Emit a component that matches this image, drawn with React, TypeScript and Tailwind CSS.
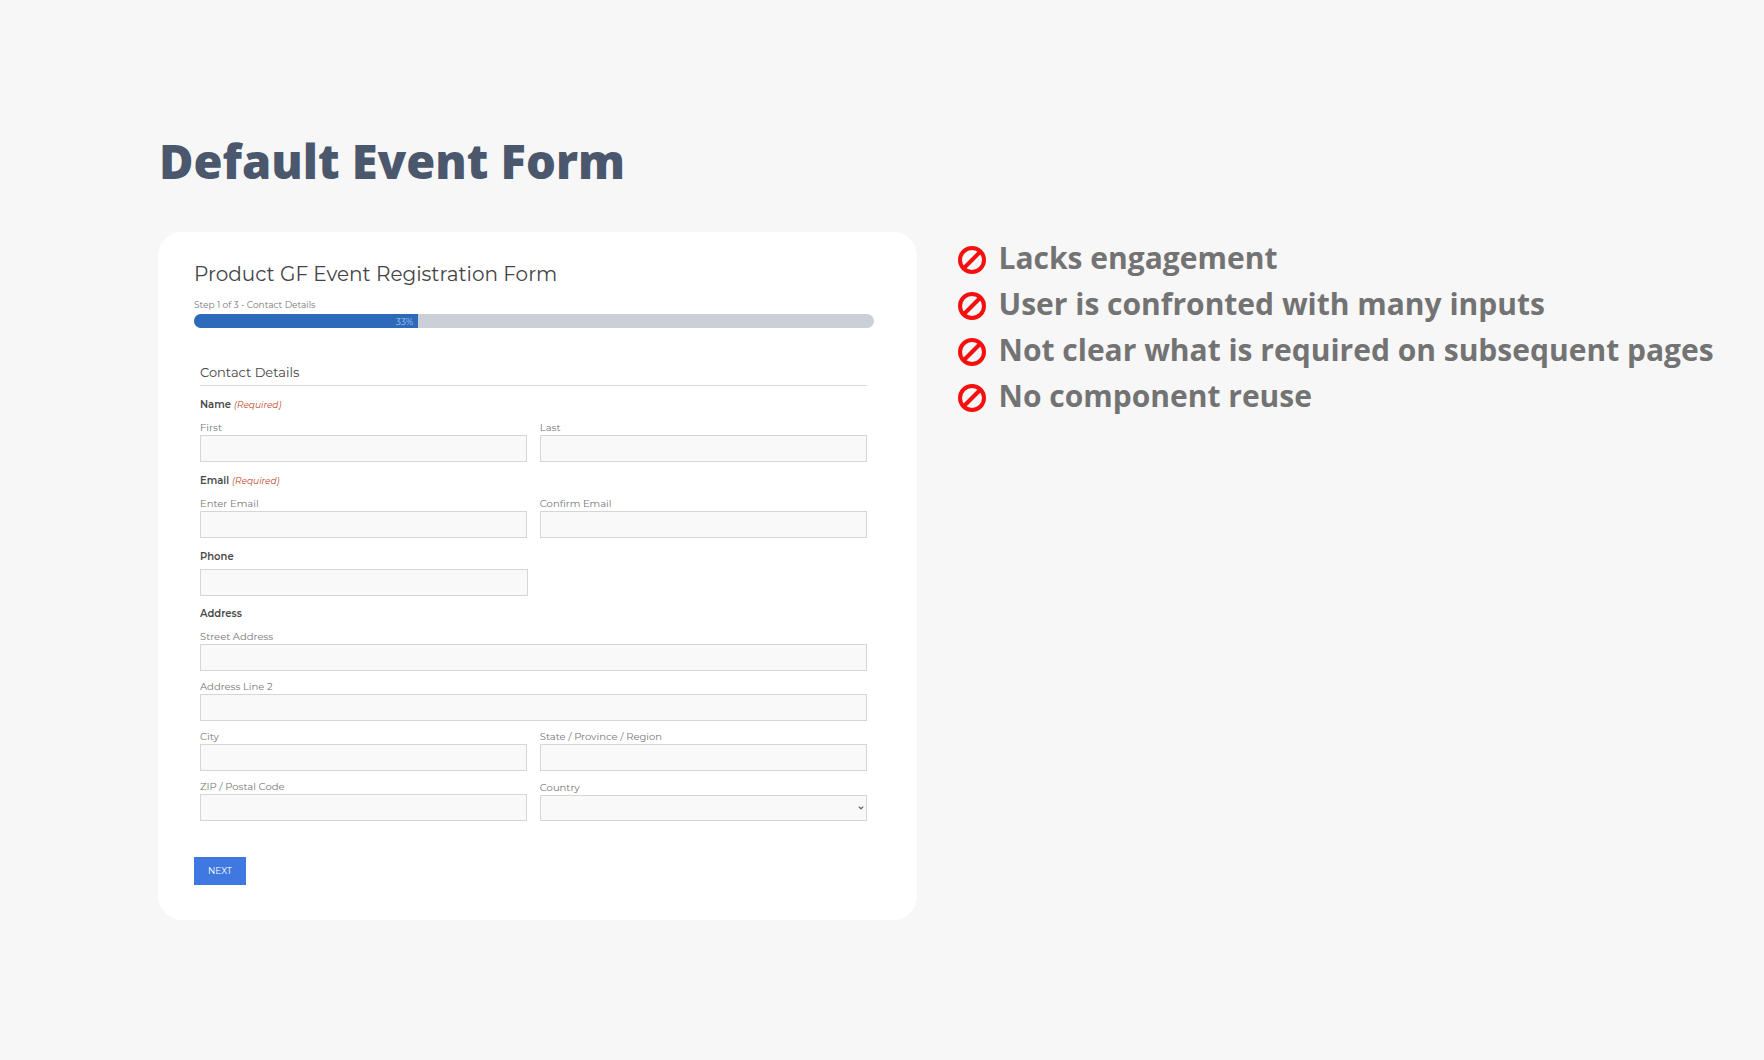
import type { ReactNode } from 'react';

const drawbacks = [
  'Lacks engagement',
  'User is confronted with many inputs',
  'Not clear what is required on subsequent pages',
  'No component reuse',
];

const control = 'block h-[27px] w-full rounded-none border border-[#d5d6d8] bg-[#f9f9f9] px-2 text-[10px] text-[#555]';

function ProhibitedIcon() {
  return (
    <svg viewBox="0 0 28 28" className="mt-1 size-7 shrink-0" fill="none" stroke="#f51010" strokeWidth="4" aria-hidden="true">
      <circle cx="14" cy="14" r="12" />
      <path d="M22.5 5.5 5.5 22.5" />
    </svg>
  );
}

function Field({ id, label, type = 'text', className = '' }: { id: string; label: string; type?: string; className?: string }) {
  return (
    <div className={className}>
      <label htmlFor={id} className="block text-[10px] leading-[15px] text-[#777]">
        {label}
      </label>
      <input id={id} type={type} className={control} />
    </div>
  );
}

function Group({ title, required = false, children }: { title: string; required?: boolean; children: ReactNode }) {
  return (
    <fieldset className="mb-[11px]">
      <legend className="mb-[7px] text-[10px] leading-4 font-semibold text-[#4a4a4a]">
        {title}
        {required && <span className="ml-[3px] text-[9px] font-normal text-[#c0452a] italic">(Required)</span>}
      </legend>
      <div className="grid grid-cols-2 gap-x-[13px] gap-y-2">{children}</div>
    </fieldset>
  );
}

function RegistrationForm() {
  return (
    <form
      onSubmit={(e) => e.preventDefault()}
      className="w-[43vw] shrink-0 rounded-3xl bg-white pt-7 pr-[43px] pb-[35px] pl-9 font-['Montserrat','Inter',sans-serif]"
    >
      <h2 className="text-xl leading-7 text-[#444]">Product GF Event Registration Form</h2>
      <p className="mt-[9px] mb-px text-[9px] leading-4 text-[#777]">Step 1 of 3 - Contact Details</p>
      <div
        role="progressbar"
        aria-label="Form progress"
        aria-valuenow={33}
        aria-valuemin={0}
        aria-valuemax={100}
        className="h-[14px] overflow-hidden rounded-full bg-[#cacfd8]"
      >
        <div className="flex h-full w-[33%] items-center justify-end bg-[#2d6bba] pr-[5px] text-[9px] leading-none text-[#a9c5ea]">33%</div>
      </div>

      <div className="mt-[33px] pr-[7px] pl-[6px]">
        <h3 className="mb-[11px] border-b border-[#d8d9db] pb-[2px] text-[13px] leading-[22px] text-[#444]">Contact Details</h3>

        <Group title="Name" required>
          <Field id="first" label="First" />
          <Field id="last" label="Last" />
        </Group>

        <Group title="Email" required>
          <Field id="email" label="Enter Email" type="email" />
          <Field id="confirm-email" label="Confirm Email" type="email" />
        </Group>

        <div className="mb-[10px]">
          <label htmlFor="phone" className="mb-1 block text-[10px] leading-4 font-semibold text-[#4a4a4a]">
            Phone
          </label>
          <div className="grid grid-cols-2 gap-x-[11px]">
            <input id="phone" type="tel" className={control} />
          </div>
        </div>

        <Group title="Address">
          <Field id="street" label="Street Address" className="col-span-2" />
          <Field id="line2" label="Address Line 2" className="col-span-2" />
          <Field id="city" label="City" />
          <Field id="state" label="State / Province / Region" />
          <Field id="zip" label="ZIP / Postal Code" />
          <div className="flex flex-col justify-end">
            <label htmlFor="country" className="block text-[10px] leading-[15px] text-[#777]">
              Country
            </label>
            <div className="relative">
              <select id="country" defaultValue="" className="block h-[26px] w-full appearance-none rounded-none border border-[#d5d6d8] bg-[#f9f9f9] px-2 text-[10px] text-[#555]">
                <option value=""></option>
              </select>
              <svg viewBox="0 0 6 4" className="pointer-events-none absolute top-[11px] right-[3px] h-1 w-[6px]" fill="none" stroke="#666" strokeWidth="1.3" aria-hidden="true">
                <path d="M.8.6 3 2.8 5.2.6" />
              </svg>
            </div>
          </div>
        </Group>
      </div>

      <button type="submit" className="mt-9 flex h-7 w-[52px] items-center justify-center bg-[#3f78e0] text-[9px] text-white">
        NEXT
      </button>
    </form>
  );
}

export default function App() {
  return (
    <main className="min-h-screen bg-[#f7f7f7] pt-[130px] pl-[158px] font-['Open_Sans',sans-serif]">
      <h1 className="pl-px text-[47px] leading-[62px] font-extrabold text-[#4a576c]">Default Event Form</h1>
      <div className="mt-10 flex items-start">
        <RegistrationForm />
        <ul className="mt-[3px] ml-[41px]">
          {drawbacks.map((text) => (
            <li key={text} className="flex h-[46px] items-center gap-[13px] text-[30px] leading-[46px] font-bold whitespace-nowrap text-[#737373]">
              <ProhibitedIcon />
              <span>{text}</span>
            </li>
          ))}
        </ul>
      </div>
    </main>
  );
}
